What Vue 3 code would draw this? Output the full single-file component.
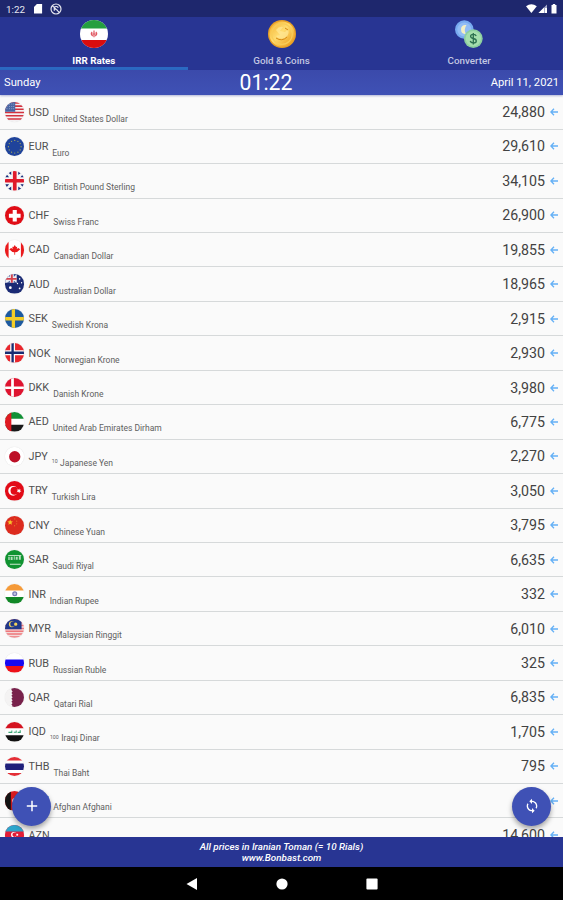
<template>
  <div class="screen">
    <header class="status">
      <span class="clock">1:22</span>
      <svg class="sd" viewBox="0 0 10 11"><path d="M3.2 0H9v10.5H0V3.2z" fill="#fff"/></svg>
      <svg class="sync" viewBox="0 0 12 12" fill="none" stroke="#e4e5ee">
        <circle cx="6" cy="6" r="5" stroke-width="1.2"/>
        <path d="M2.3 2.6l7.2 7M4.3 7.8V4.4c1-1.3 3.6-1.2 3.8.5M8 7.5L5 6" stroke-width="1.2"/>
      </svg>
      <svg class="signals" viewBox="0 0 32 10">
        <path d="M0 2.2Q5.4-1.8 10.8 2.2L5.4 9z" fill="#fff"/>
        <path d="M12.5 9L21 .5V9z" fill="#a5a9c9"/>
        <path d="M12.5 9L18 3.5V9zM19 4h2v5h-2z" fill="#fff"/>
        <path d="M25.5 1h1.3V0h2.4v1h1.3v8.5h-5z" fill="#fff"/>
      </svg>
    </header>

    <nav class="tabs">
      <div v-for="tab in tabs" :key="tab.label" class="tab" :class="{ active: tab.active }">
        <svg v-if="tab.icon === 'iran'" class="tab-icon" viewBox="0 0 28 28">
          <clipPath id="ir"><circle cx="14" cy="14" r="14"/></clipPath>
          <g clip-path="url(#ir)">
            <path d="M0 0h28v28H0z" fill="#fff"/>
            <path d="M0 0h28v8.5H0z" fill="#249f40"/>
            <path d="M0 20h28v8H0z" fill="#da0d0d"/>
          </g>
          <path d="M14 10.6v6.6M12.2 12q-2.2 2 .6 4M15.8 12q2.2 2-.6 4M11.5 14h5" fill="none" stroke="#e05660" stroke-width="1.2"/>
        </svg>
        <svg v-else-if="tab.icon === 'coin'" class="tab-icon" viewBox="0 0 28 28">
          <defs>
            <linearGradient id="gold" x1="0" y1="0" x2="1" y2="1">
              <stop offset="0" stop-color="#f2ad2c"/>
              <stop offset=".45" stop-color="#ffdc70"/>
              <stop offset="1" stop-color="#e8930f"/>
            </linearGradient>
          </defs>
          <circle cx="14" cy="14" r="14" fill="#e9a026"/>
          <circle cx="14" cy="14" r="12.6" fill="url(#gold)"/>
          <circle cx="14" cy="14" r="10.3" fill="none" stroke="#f9cd58" stroke-width="1.2"/>
          <path d="M8 10q3-4 7-3l-3 4 5 1 3-3q2 6-3 9-6 2-9-2l4-1z" fill="#ffe796" opacity=".75"/>
          <path d="M8 18q6 4 11-1M17 8l3 2" fill="none" stroke="#d78b16"/>
        </svg>
        <svg v-else class="tab-icon" viewBox="0 0 28 28">
          <circle cx="9.3" cy="9.5" r="9.3" fill="#78aaf0"/>
          <circle cx="9.3" cy="9.5" r="7" fill="#91bcf6"/>
          <path d="M11.5 5Q6 4.4 6 9.6q.2 4.7 5 4.6-2.6-4.5.5-9.2z" fill="#f3efc4"/>
          <circle cx="18.3" cy="18.6" r="9.4" fill="#8ccfa0"/>
          <circle cx="18.3" cy="18.6" r="7.7" fill="#a5dfae"/>
          <path d="M21.2 16q-.6-1.7-2.9-1.7-2.7.1-2.7 2 0 1.6 2.7 2.2 3 .6 3 2.4 0 2-2.9 2.1-2.7-.1-3.2-2M18.3 13v11.4" fill="none" stroke="#2c7150" stroke-width="1.3"/>
        </svg>
        <span>{{ tab.label }}</span>
      </div>
    </nav>

    <div class="infobar">
      <span>Sunday</span>
      <span class="time">01:22</span>
      <span class="date">April 11, 2021</span>
    </div>

    <main class="list">
      <div v-for="c in currencies" :key="c.code" class="row">
        <svg class="flag" viewBox="0 0 20 20">
          <path v-for="(s, i) in flags[c.code]" :key="i" :d="s[1]" :fill="s[0]"/>
        </svg>
        <span class="code">{{ c.code }}</span>
        <span class="name"><sup v-if="c.unit">{{ c.unit }}</sup>{{ c.name }}</span>
        <span class="price">{{ c.price }}</span>
        <svg class="arrow" viewBox="0 0 8 8" fill="none" stroke="#64b0f6" stroke-width="1.3">
          <path d="M8 4H1.2M4 .8L.9 4 4 7.2"/>
        </svg>
      </div>
      <button class="fab left">
        <svg viewBox="0 0 12 12"><path d="M6 .8v10.4M.8 6h10.4" stroke="#fff" stroke-width="1.5"/></svg>
      </button>
      <button class="fab right">
        <svg class="refresh" viewBox="0 0 24 24" fill="#fff">
          <path d="M12 4V1L8 5l4 4V6c3.31 0 6 2.69 6 6 0 1.01-.25 1.97-.7 2.8l1.46 1.46C19.54 15.03 20 13.57 20 12c0-4.42-3.58-8-8-8zm0 14c-3.31 0-6-2.69-6-6 0-1.01.25-1.97.7-2.8L5.24 7.74C4.46 8.97 4 10.43 4 12c0 4.42 3.58 8 8 8v3l4-4-4-4v3z"/>
        </svg>
      </button>
    </main>

    <footer class="note">
      <span>All prices in Iranian Toman (= 10 Rials)</span>
      <span>www.Bonbast.com</span>
    </footer>

    <div class="navbar">
      <svg viewBox="0 0 12 12"><path d="M11 0v12L.5 6z" fill="#fff"/></svg>
      <svg viewBox="0 0 12 12"><circle cx="6" cy="6" r="5.6" fill="#fff"/></svg>
      <svg viewBox="0 0 12 12"><rect x=".4" y=".4" width="11.2" height="11.2" rx="1" fill="#fff"/></svg>
    </div>
  </div>
</template>

<script setup>
const tabs = [
  { label: 'IRR Rates', icon: 'iran', active: true },
  { label: 'Gold & Coins', icon: 'coin' },
  { label: 'Converter', icon: 'convert' }
]

const currencies = [
  { code: 'USD', name: 'United States Dollar', price: '24,880' },
  { code: 'EUR', name: 'Euro', price: '29,610' },
  { code: 'GBP', name: 'British Pound Sterling', price: '34,105' },
  { code: 'CHF', name: 'Swiss Franc', price: '26,900' },
  { code: 'CAD', name: 'Canadian Dollar', price: '19,855' },
  { code: 'AUD', name: 'Australian Dollar', price: '18,965' },
  { code: 'SEK', name: 'Swedish Krona', price: '2,915' },
  { code: 'NOK', name: 'Norwegian Krone', price: '2,930' },
  { code: 'DKK', name: 'Danish Krone', price: '3,980' },
  { code: 'AED', name: 'United Arab Emirates Dirham', price: '6,775' },
  { code: 'JPY', name: 'Japanese Yen', price: '2,270', unit: '10' },
  { code: 'TRY', name: 'Turkish Lira', price: '3,050' },
  { code: 'CNY', name: 'Chinese Yuan', price: '3,795' },
  { code: 'SAR', name: 'Saudi Riyal', price: '6,635' },
  { code: 'INR', name: 'Indian Rupee', price: '332' },
  { code: 'MYR', name: 'Malaysian Ringgit', price: '6,010' },
  { code: 'RUB', name: 'Russian Ruble', price: '325' },
  { code: 'QAR', name: 'Qatari Rial', price: '6,835' },
  { code: 'IQD', name: 'Iraqi Dinar', price: '1,705', unit: '100' },
  { code: 'THB', name: 'Thai Baht', price: '795' },
  { code: 'AFN', name: 'Afghan Afghani', price: '' },
  { code: 'AZN', name: '', price: '14,600' }
]

const full = 'M0 0h20v20H0z'
const bar = (y, h, x = 0, w = 20) => `M${x} ${y}h${w}v${h}h${-w}z`
const dot = (x, y, r) => `M${x - r} ${y}a${r} ${r} 0 1 0 ${2 * r} 0a${r} ${r} 0 1 0 ${-2 * r} 0z`
const ring = (n, r, size) =>
  Array.from({ length: n }, (_, i) => {
    const a = (i * 2 * Math.PI) / n
    return dot(10 + r * Math.cos(a), 10 + r * Math.sin(a), size)
  }).join('')
const cross = (w, x = 8.6) => bar(10 - w / 2, w) + bar(0, 20, x - w / 2, w)

// each flag is a stack of [fill, path] layers on a 20x20 box
const flags = {
  USD: [
    ['#f4f1f3', full],
    ['#d3333f', bar(0, 1.7) + bar(3.4, 1.6) + bar(6.7, 1.6) + bar(10, 1.6) + bar(13.3, 1.6) + bar(16.6, 1.6)],
    ['#4a66a4', bar(0, 10, 0, 10.5)],
    ['#c3cce0', [2, 4.5, 7].flatMap(y => [2, 4.5, 7, 9].map(x => dot(x, y, 0.5))).join('')]
  ],
  EUR: [['#1f439b', full], ['#a6a85c', ring(12, 6.5, 0.65)]],
  GBP: [
    ['#f5f5f7', full],
    ['#172c79', 'M6.4 0v4.2L2.8 1.2zM13.6 0v4.2l3.6-3zM0 6.4h4.2L1.2 2.8zM20 6.4h-4.2l3-3.6zM0 13.6h4.2l-3 3.6zM20 13.6h-4.2l3 3.6zM6.4 20v-4.2l-3.6 3zM13.6 20v-4.2l3.6 3z'],
    ['#e01a2b', cross(3.8, 10)]
  ],
  CHF: [['#e00d16', full], ['#fff', bar(7.9, 4.2, 4, 12) + bar(4, 12, 7.9, 4.2)]],
  CAD: [
    ['#fff', full],
    ['#ea1a1c', bar(0, 20, 0, 3.7) + bar(0, 20, 16.3, 3.7)],
    ['#ea1a1c', 'M10 5l1.3 2.3 1.2-.5-.4 2.4 1.5-1 2 1.2-3.2 3-2 .2V15h-.8v-2.4l-2-.2-3.2-3 2-1.2 1.5 1-.4-2.4 1.2.5z']
  ],
  AUD: [
    ['#1b2b75', full],
    ['#edf0f5', 'M0 0h12v9H0z'],
    ['#d6434d', bar(4, 2, 0, 12) + bar(0, 9, 6, 2)],
    ['#354b91', 'M2 0h3v3zM9 0h3L9 3zM2 9l3-2v2zM9 7l3 2H9z'],
    ['#fff', dot(5.5, 14, 1.4) + dot(15, 5, 0.8) + dot(17, 9, 0.7) + dot(12.8, 9.7, 0.7) + dot(15, 14.8, 0.9)]
  ],
  SEK: [['#1d5aa0', full], ['#f3cd28', cross(3.4)]],
  NOK: [['#e9262d', full], ['#fff', cross(5, 7.8)], ['#172c72', cross(2.4, 7.8)]],
  DKK: [['#df1430', full], ['#fff', cross(2.8, 7.7)]],
  AED: [['#fff', full], ['#119035', bar(0, 6.8)], ['#1a1a1a', bar(13.2, 6.8)], ['#df1a22', bar(0, 20, 0, 6.5)]],
  JPY: [['#fff', full], ['#bd1027', dot(10, 10, 5.8)]],
  TRY: [
    ['#e20b17', full],
    ['#fff', dot(8.3, 10, 5)],
    ['#e20b17', dot(9.7, 10, 4)],
    ['#fff', 'M16 8.2l-.5 1.6 1.3 1-1.7.1-.4 1.7-1-1.5-1.7.4 1.1-1.5-1.1-1.4 1.7.5 1-1.5.1 1.7z']
  ],
  CNY: [
    ['#dc2b1e', full],
    ['#f6c42a', 'M5.3 3.5l.8 2 2.1.1-1.6 1.4.5 2.1-1.8-1.2L3.5 9 4 7 2.3 5.6l2.2-.1z'],
    ['#e5702a', dot(10, 3, 0.65) + dot(12, 5.3, 0.65) + dot(12, 8, 0.65) + dot(9.8, 10, 0.65)]
  ],
  SAR: [
    ['#109331', full],
    ['#b7dfbf', bar(5, 1.2, 3.3, 13.4) + bar(7, 3.2, 3.4, 1.4) + bar(7, 3.2, 5.8, 2) + bar(6.5, 3.5, 9, 1) + bar(7, 3, 11, 2) + bar(6, 4, 14.2, 2)],
    ['#cbe9cf', bar(14, 1, 5, 11)]
  ],
  INR: [['#fff', full], ['#f59a38', bar(0, 6.7)], ['#128827', bar(13.4, 6.6)], ['#777bb5', dot(10, 10, 2.6)], ['#c4c7e2', dot(10, 10, 1.3)]],
  MYR: [
    ['#f4d9da', full],
    ['#ed777b', bar(0, 1.4) + bar(3, 1.4) + bar(6, 1.4) + bar(9, 1.4) + bar(11.8, 1.5) + bar(14.7, 1.4) + bar(17.6, 1.4)],
    ['#20388a', bar(0, 10.5, 0, 17)],
    ['#efd15c', dot(7, 5.4, 3)],
    ['#20388a', dot(8, 5.2, 2.6)],
    ['#efd15c', dot(11, 5.3, 1.7)]
  ],
  RUB: [['#fff', full], ['#1708f2', bar(6.7, 6.8)], ['#ee1119', bar(13.4, 6.6)]],
  QAR: [['#f4f3f3', full], ['#78214b', 'M6.6 0H20v20H6.6l1.2-1.5L6.6 17l1.2-1.5L6.6 14l1.2-1.5L6.6 11l1.2-1.5L6.6 8l1.2-1.5L6.6 5l1.2-1.5L6.6 2z']],
  IQD: [
    ['#fff', full],
    ['#d51320', bar(0, 6.5)],
    ['#111', bar(13.5, 6.5)],
    ['#3ba876', 'M3.5 10h3V8.8h1v2.4h-4zM9 10.1h2V8.7h1v2.4H9zM13 10h2V8.5h1.2v2.7H13z']
  ],
  THB: [['#fff', full], ['#e42e36', bar(0, 3.5) + bar(16.5, 3.5)], ['#20207b', bar(6.7, 6.6)]],
  AFN: [['#d91c20', full], ['#141414', bar(0, 20, 0, 6)], ['#159143', bar(0, 20, 14, 6)], ['#edb6b6', dot(10, 10, 2.8)]],
  AZN: [
    ['#e21d38', full],
    ['#2da6cc', bar(0, 6.7)],
    ['#359b4b', bar(13.4, 6.6)],
    ['#fff', dot(9, 10, 2.8)],
    ['#e21d38', dot(9.8, 10, 2.2)],
    ['#fff', dot(12.6, 10, 1)]
  ]
}
</script>

<style>
body { background: #000; }
</style>

<style scoped>
.screen {
  width: 563px; height: 900px; display: flex; flex-direction: column;
  overflow: hidden; background: #fafafa; color: #fff;
  font-family: Roboto, "Liberation Sans", sans-serif;
}
.status {
  height: 17px; flex: none; display: flex; align-items: center;
  background: #1e276d; padding: 1px 5px 0 6px; box-sizing: border-box;
}
.clock { font-size: 9.8px; width: 28px; color: #e6e7f0; }
.sd { width: 9px; height: 10px; }
.sync { width: 12px; height: 12px; margin-left: 7px; }
.signals { width: 32px; height: 10px; margin-left: auto; }

.tabs { height: 53px; flex: none; display: flex; background: #283593; }
.tab {
  flex: 1; display: flex; flex-direction: column; align-items: center;
  box-sizing: border-box; padding-top: 3px; border-bottom: 3px solid transparent;
  font-size: 9.8px; line-height: 10px; font-weight: 500; color: #c3c7e2;
}
.tab.active { border-color: #2b69c2; color: #fff; font-weight: 700; }
.tab-icon { width: 28px; height: 28px; margin-bottom: 8px; }

.infobar {
  height: 25px; flex: none; display: grid; grid-template-columns: 1fr auto 1fr;
  align-items: center; background: linear-gradient(#3b4aab, #3f51b5);
  padding: 0 4px; font-size: 11.2px; position: relative;
  box-shadow: 0 1px 2px rgba(40,53,147,.35);
}
.infobar .time { font-size: 21.2px; line-height: 25px; margin-right: 31px; }
.infobar .date { text-align: right; }

.list { flex: 1; min-height: 0; position: relative; overflow: hidden; padding-top: .3px; }
.row {
  height: 34.45px; box-sizing: border-box; display: flex; align-items: center;
  border-bottom: 1.4px solid #d6d9da; padding: 0 5px 0 4.5px; color: #484848;
}
.flag { width: 19.5px; height: 19.5px; border-radius: 50%; flex: none; box-shadow: 0 0 1px rgba(0,0,0,.2); }
.code { font-size: 10.8px; margin-left: 4.5px; color: #505050; }
.name { font-size: 8.5px; margin-left: 4px; padding-top: 13px; color: #606060; white-space: nowrap; }
.name sup { font-size: 5.2px; line-height: 0; margin-right: 2.5px; vertical-align: 2.5px; }
.price { font-size: 14.2px; margin-left: auto; color: #424242; }
.arrow { width: 8px; height: 8px; margin-left: 5px; }

.fab {
  position: absolute; bottom: 11.5px; width: 39px; height: 39px; border: 0; padding: 0;
  border-radius: 50%; background: #3f51b5; box-shadow: 0 3px 5px rgba(0,0,0,.35);
  display: flex; align-items: center; justify-content: center;
}
.fab.left { left: 12px; }
.fab.right { right: 12px; }
.fab svg { width: 12px; height: 12px; }
.fab .refresh { width: 16px; height: 16px; }

.note {
  height: 30px; flex: none; display: flex; flex-direction: column; align-items: center;
  box-sizing: border-box; padding-top: 4px; background: #283593;
  font-size: 9.8px; line-height: 11px; font-style: italic; font-weight: 500;
}
.navbar {
  height: 33px; flex: none; display: flex; justify-content: center; align-items: center;
  gap: 78px; background: #000;
}
.navbar svg { width: 12px; height: 12px; }
</style>
